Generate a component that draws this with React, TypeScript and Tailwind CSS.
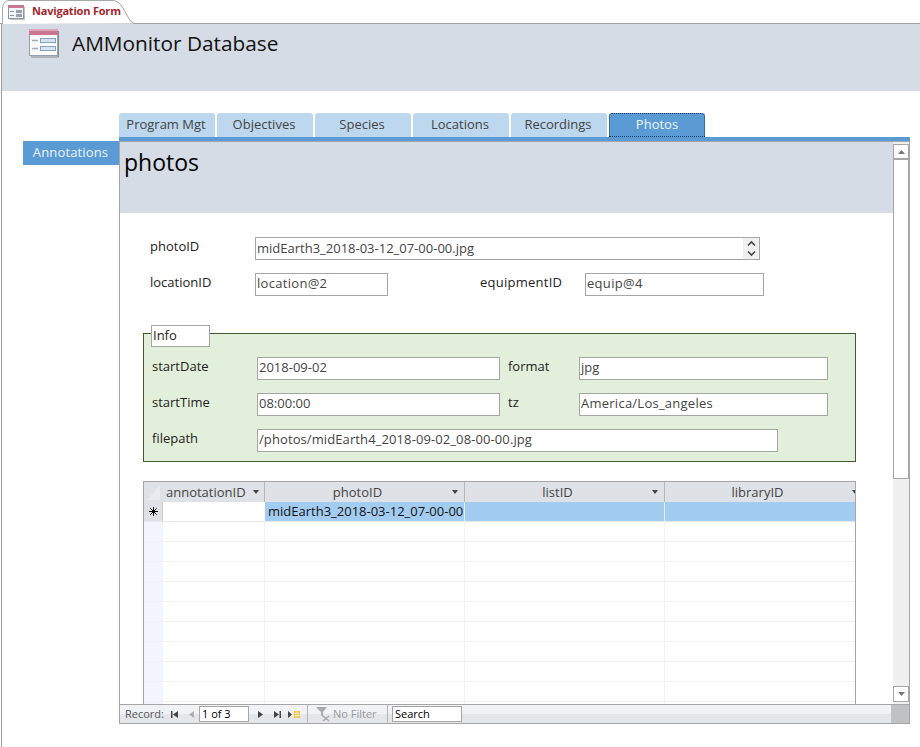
import React from 'react';

const tabs = ['Program Mgt', 'Objectives', 'Species', 'Locations', 'Recordings'];

const TabIcon = () => (
  <svg width="17" height="16" viewBox="0 0 17 16" className="shrink-0">
    <rect x=".5" y="1.500" width="15" height="13" fill="#f2f4f8" stroke="#8f95a3" />
    <rect x="0" y="1" width="16" height="3" fill="#c9788f" />
    <path d="M2 7.500h4M2 11.500h4" stroke="#8b8f98" />
    <rect x="8" y="6" width="6" height="3" fill="#9aa0ab" />
    <rect x="8" y="10" width="6" height="3" fill="#9aa0ab" />
    <path d="M16.500 3v12.500H2" fill="none" stroke="#c0c0c0" />
  </svg>
);

const HeaderIcon = () => (
  <svg width="32" height="30" viewBox="0 0 32 30" className="shrink-0">
    <rect x="1.500" y="1.500" width="28" height="26" fill="#fafbfd" stroke="#9aa0ad" />
    <rect x="1" y="1" width="29" height="6" fill="#cb7690" />
    <rect x="1" y="1" width="29" height="2" fill="#dca3b4" />
    <path d="M4 12.500h6M4 20.500h6" stroke="#a3abba" strokeWidth="1.5" />
    <rect x="12.500" y="10.500" width="15" height="4" fill="#d5e2f1" stroke="#85a3c6" />
    <rect x="12.500" y="18.500" width="15" height="4" fill="#d5e2f1" stroke="#85a3c6" />
    <path d="M30.500 3v26H3" fill="none" stroke="#8a8a8a" />
  </svg>
);

const Field = ({ value, className }: { value: string; className: string }) => (
  <div className={`h-[23px] shrink-0 border border-[#a6a6a6] bg-white pl-[1px] text-[13px] leading-[18px] text-[#444] ${className}`}>
    {value}
  </div>
);

// labels sit a little above the middle of their field
const Label = ({ text, className }: { text: string; className: string }) => (
  <div className={`h-[23px] shrink-0 text-[13px] leading-[19px] text-[#222] ${className}`}>{text}</div>
);

const SortArrow = () => (
  <svg width="6" height="4" viewBox="0 0 6 4" className="shrink-0">
    <path d="M0 0h6L3 4z" fill="#444" />
  </svg>
);

const NavIcon = ({ d, color = '#444', className }: { d: string; color?: string; className: string }) => (
  <svg width="9" height="9" viewBox="0 0 9 9" className={`shrink-0 ${className}`}>
    <path d={d} fill={color} />
  </svg>
);

const columns = ['photoID', 'listID', 'libraryID'];

const App = () => {
  return (
    <div className="flex h-[747px] w-[920px] flex-col overflow-hidden bg-white font-['Open_Sans','Noto_Sans',sans-serif]">
      {/* object tab strip */}
      <div className="relative flex h-[24px] shrink-0 items-end border-b border-[#a0a0a0] pl-[2px]">
        <svg width="134" height="24" viewBox="0 0 134 24" className="absolute top-0 left-0">
          <path d="M2.500 24V8Q3 1 9 .5H113Q119 1 123 8L128 17Q130 22 134 23.500" fill="#fff" stroke="#a8a8a8" />
        </svg>
        <div className="relative flex h-[23px] items-center gap-[7px] pl-[6px]">
          <TabIcon />
          <span className="text-[11px] font-bold tracking-[-0.2px] text-[#a4262c]">Navigation Form</span>
        </div>
      </div>

      <div className="ml-[1px] flex flex-1 flex-col border-l border-[#9a9a9a]">
        <div className="flex h-[67px] shrink-0 items-start gap-[12px] bg-[#d6dce5] pt-[4px] pl-[26px]">
          <HeaderIcon />
          <span className="text-[20.8px] leading-[30px] text-[#111]">AMMonitor Database</span>
        </div>

        <div className="flex pt-[22px] pl-[21px]">
          <div className="pt-[28px]">
            <div className="flex h-[24px] w-[96px] items-center justify-center bg-[#5b9bd5] pr-[1px] text-[13px] tracking-[0.15px] text-[#eef4fb]">
              Annotations
            </div>
          </div>

          <div className="flex w-[791px] flex-col">
            <div className="flex h-[24px] gap-[2px]">
              {tabs.map(tab => (
                <div
                  key={tab}
                  className="flex w-[96px] items-center justify-center rounded-t-[3px] bg-[#bdd7ee] pr-[2px] text-[13px] text-[#444]"
                >
                  {tab}
                </div>
              ))}
              <div className="flex w-[96px] items-center justify-center rounded-t-[3px] border border-dotted border-[#1f3a5f] bg-[#5b9bd5] text-[13px] text-[#eef4fb]">
                Photos
              </div>
            </div>
            <div className="h-[4px] bg-[#5b9bd5]" />

            <div className="flex h-[583px] flex-col border border-[#a6a6a6]">
              <div className="flex h-[562px] shrink-0">
                {/* form body */}
                <div className="flex w-[773px] shrink-0 flex-col">
                  <div className="h-[71px] shrink-0 bg-[#d6dce5] pl-[4px] text-[23px] leading-[40px] text-black">photos</div>

                  <div className="mt-[24px] flex items-center pl-[30px]">
                    <Label text="photoID" className="w-[105px]" />
                    <div className="flex h-[23px] w-[505px] items-center border border-[#a6a6a6] bg-white pl-[1px] text-[13px] leading-[18px] text-[#444]">
                      <span className="mb-[2px] flex-1">midEarth3_2018-03-12_07-00-00.jpg</span>
                      <div className="flex h-full w-[16px] flex-col items-center justify-center gap-[1px] bg-[#f0f0f0]">
                        <svg width="9" height="19" viewBox="0 0 9 19">
                          <path d="M1 6.500l3.500-3.500 3.500 3.500M1 12.500l3.500 3.500 3.500-3.500" fill="none" stroke="#444" strokeWidth="1.6" />
                        </svg>
                      </div>
                    </div>
                  </div>

                  <div className="mt-[13px] flex items-center pl-[30px]">
                    <Label text="locationID" className="w-[105px]" />
                    <Field value="location@2" className="w-[133px] tracking-[0.3px]" />
                    <Label text="equipmentID" className="ml-[92px] w-[105px] tracking-[0.25px]" />
                    <Field value="equip@4" className="w-[179px] tracking-[0.3px]" />
                  </div>

                  {/* Info group */}
                  <div className="relative mt-[37px] ml-[23px] flex h-[129px] w-[713px] flex-col border border-[#3f5c2f] bg-[#e2efda] pt-[23px] pl-[8px]">
                    <div className="absolute -top-[9px] left-[7px] h-[22px] w-[59px] border border-[#a6a6a6] bg-white pl-[1px] text-[13px] leading-[19px] text-[#222]">
                      Info
                    </div>
                    <div className="flex items-center">
                      <Label text="startDate" className="w-[105px]" />
                      <Field value="2018-09-02" className="w-[243px]" />
                      <Label text="format" className="ml-[8px] w-[71px]" />
                      <Field value="jpg" className="w-[249px]" />
                    </div>
                    <div className="mt-[13px] flex items-center">
                      <Label text="startTime" className="w-[105px]" />
                      <Field value="08:00:00" className="w-[243px]" />
                      <Label text="tz" className="ml-[8px] w-[71px]" />
                      <Field value="America/Los_angeles" className="w-[249px] tracking-[0.25px]" />
                    </div>
                    <div className="mt-[13px] flex items-center">
                      <Label text="filepath" className="w-[105px]" />
                      <Field value="/photos/midEarth4_2018-09-02_08-00-00.jpg" className="w-[521px] tracking-[0.1px]" />
                    </div>
                  </div>

                  {/* annotations datasheet */}
                  <div className="mt-[19px] ml-[23px] flex h-[223px] w-[713px] flex-col overflow-hidden border-t border-r border-l border-[#a6a6a6]">
                    <div className="flex h-[20px] shrink-0 bg-[#dee1e6] text-[13px] leading-[18px] text-[#444]">
                      <div className="flex w-[19px] shrink-0 items-end justify-end border-r border-[#dee1e6] py-[2px] pr-[2px]">
                        <svg width="13" height="15" viewBox="0 0 13 15">
                          <path d="M13 0v15H0z" fill="#e9ebef" />
                        </svg>
                      </div>
                      <div className="flex w-[102px] shrink-0 items-center justify-between border-r border-[#b5b5b5] pr-[5px] pl-[3px]">
                        <span>annotationID</span>
                        <SortArrow />
                      </div>
                      {columns.map(col => (
                        <div key={col} className="flex w-[200px] shrink-0 items-center border-r border-[#b5b5b5] pr-[6px]">
                          <span className="flex-1 pr-[2px] text-center">{col}</span>
                          <SortArrow />
                        </div>
                      ))}
                    </div>
                    <div className="flex h-[20px] shrink-0 border-b border-[#e8e8e8] text-[13px] leading-[19px]">
                      <div className="flex w-[19px] shrink-0 items-center justify-center border-r border-[#c8c8c8] bg-[#dee1e6]">
                        <svg width="9" height="9" viewBox="0 0 9 9">
                          <path d="M4.500 0v9M0 4.500h9M1.300 1.300l6.400 6.400M7.700 1.300l-6.400 6.400" stroke="#000" strokeWidth="1" />
                        </svg>
                      </div>
                      <div className="w-[102px] shrink-0 bg-white" />
                      <div className="w-[200px] shrink-0 border-r border-[#e8eef6] bg-[#a3cdf0] pl-[3px] whitespace-nowrap text-[#111]">midEarth3_2018-03-12_07-00-00</div>
                      <div className="w-[200px] shrink-0 border-r border-[#e8eef6] bg-[#a3cdf0]" />
                      <div className="flex-1 bg-[#a3cdf0]" />
                    </div>
                    {Array.from({ length: 10 }).map((_, i) => (
                      <div key={i} className="flex h-[20px] shrink-0 border-b border-[#f2f2f2]">
                        <div className="w-[19px] shrink-0 bg-[#f3f5fc]" />
                        <div className="w-[102px] shrink-0 border-r border-[#f2f2f2]" />
                        <div className="w-[200px] shrink-0 border-r border-[#f2f2f2]" />
                        <div className="w-[200px] shrink-0 border-r border-[#f2f2f2]" />
                      </div>
                    ))}
                  </div>
                </div>

                {/* vertical scrollbar */}
                <div className="flex w-[16px] shrink-0 flex-col justify-between bg-[#f0f0f0] py-[2px]">
                  <div className="flex h-[335px] flex-col border border-[#a6a6a6] bg-white">
                    <div className="flex h-[15px] items-center justify-center border-b-2 border-[#a6a6a6]">
                      <svg width="7" height="4" viewBox="0 0 7 4"><path d="M3.500 0L7 4H0z" fill="#777" /></svg>
                    </div>
                  </div>
                  <div className="flex h-[16px] items-center justify-center border border-[#a6a6a6] bg-white">
                    <svg width="7" height="4" viewBox="0 0 7 4"><path d="M0 0h7L3.500 4z" fill="#777" /></svg>
                  </div>
                </div>
              </div>

              {/* record navigation */}
              <div className="flex h-[19px] shrink-0 border-t border-[#a6a6a6] bg-gradient-to-b from-[#f1f2f5] from-50% to-[#e4e6ea] to-50%">
                <div className="flex flex-1 items-center text-[11px] text-[#555]">
                  <span className="ml-[5px] w-[45px] shrink-0">Record:</span>
                  <NavIcon className="" d="M1 1h1.500v7H1zM8 1v7L3 4.500z" />
                  <NavIcon className="ml-[8px]" d="M7 1v7L2 4.500z" color="#b0b0b0" />
                  <div className="ml-[3px] h-[16px] w-[50px] shrink-0 border border-[#a6a6a6] bg-white pl-[2px] leading-[14px] text-black">1 of 3</div>
                  <NavIcon className="ml-[7px]" d="M2 1v7l5-3.500z" />
                  <NavIcon className="ml-[8px]" d="M1 1v7l5-3.500zM6.500 1H8v7H6.500z" />
                  <svg width="6" height="9" viewBox="0 0 6 9" className="ml-[5px] shrink-0">
                    <path d="M1 1v7l4-3.500z" fill="#444" />
                  </svg>
                  <svg width="6" height="7" viewBox="0 0 6 7" className="ml-[1px] shrink-0">
                    <path d="M0 0h6v7H0z" fill="#e8b92f" />
                    <path d="M0 2.300h6M0 4.600h6M2 0v7M4 0v7" stroke="#fff6d0" strokeWidth=".7" />
                  </svg>
                  <div className="mr-[7px] ml-[7px] h-full border-l border-[#b5b5b5]" />
                  <svg width="16" height="16" viewBox="0 0 16 16" className="shrink-0">
                    <path d="M1 1h11L8 6v5L6 9V6z" fill="#a8a8a8" />
                    <path d="M8 10l6 5M14 10l-6 5" stroke="#a8a8a8" strokeWidth="1.4" />
                  </svg>
                  <span className="ml-[2px] w-[54px] shrink-0 text-[#999]">No Filter</span>
                  <div className="mr-[4px] h-full border-l border-[#b5b5b5]" />
                  <div className="h-[16px] w-[70px] shrink-0 border border-[#a6a6a6] bg-white pl-[2px] leading-[14px] text-black">Search</div>
                </div>
                <div className="w-[18px] shrink-0 bg-[#c0c1c5]" />
              </div>
            </div>
          </div>
        </div>
      </div>
    </div>
  );
};

export default App;
